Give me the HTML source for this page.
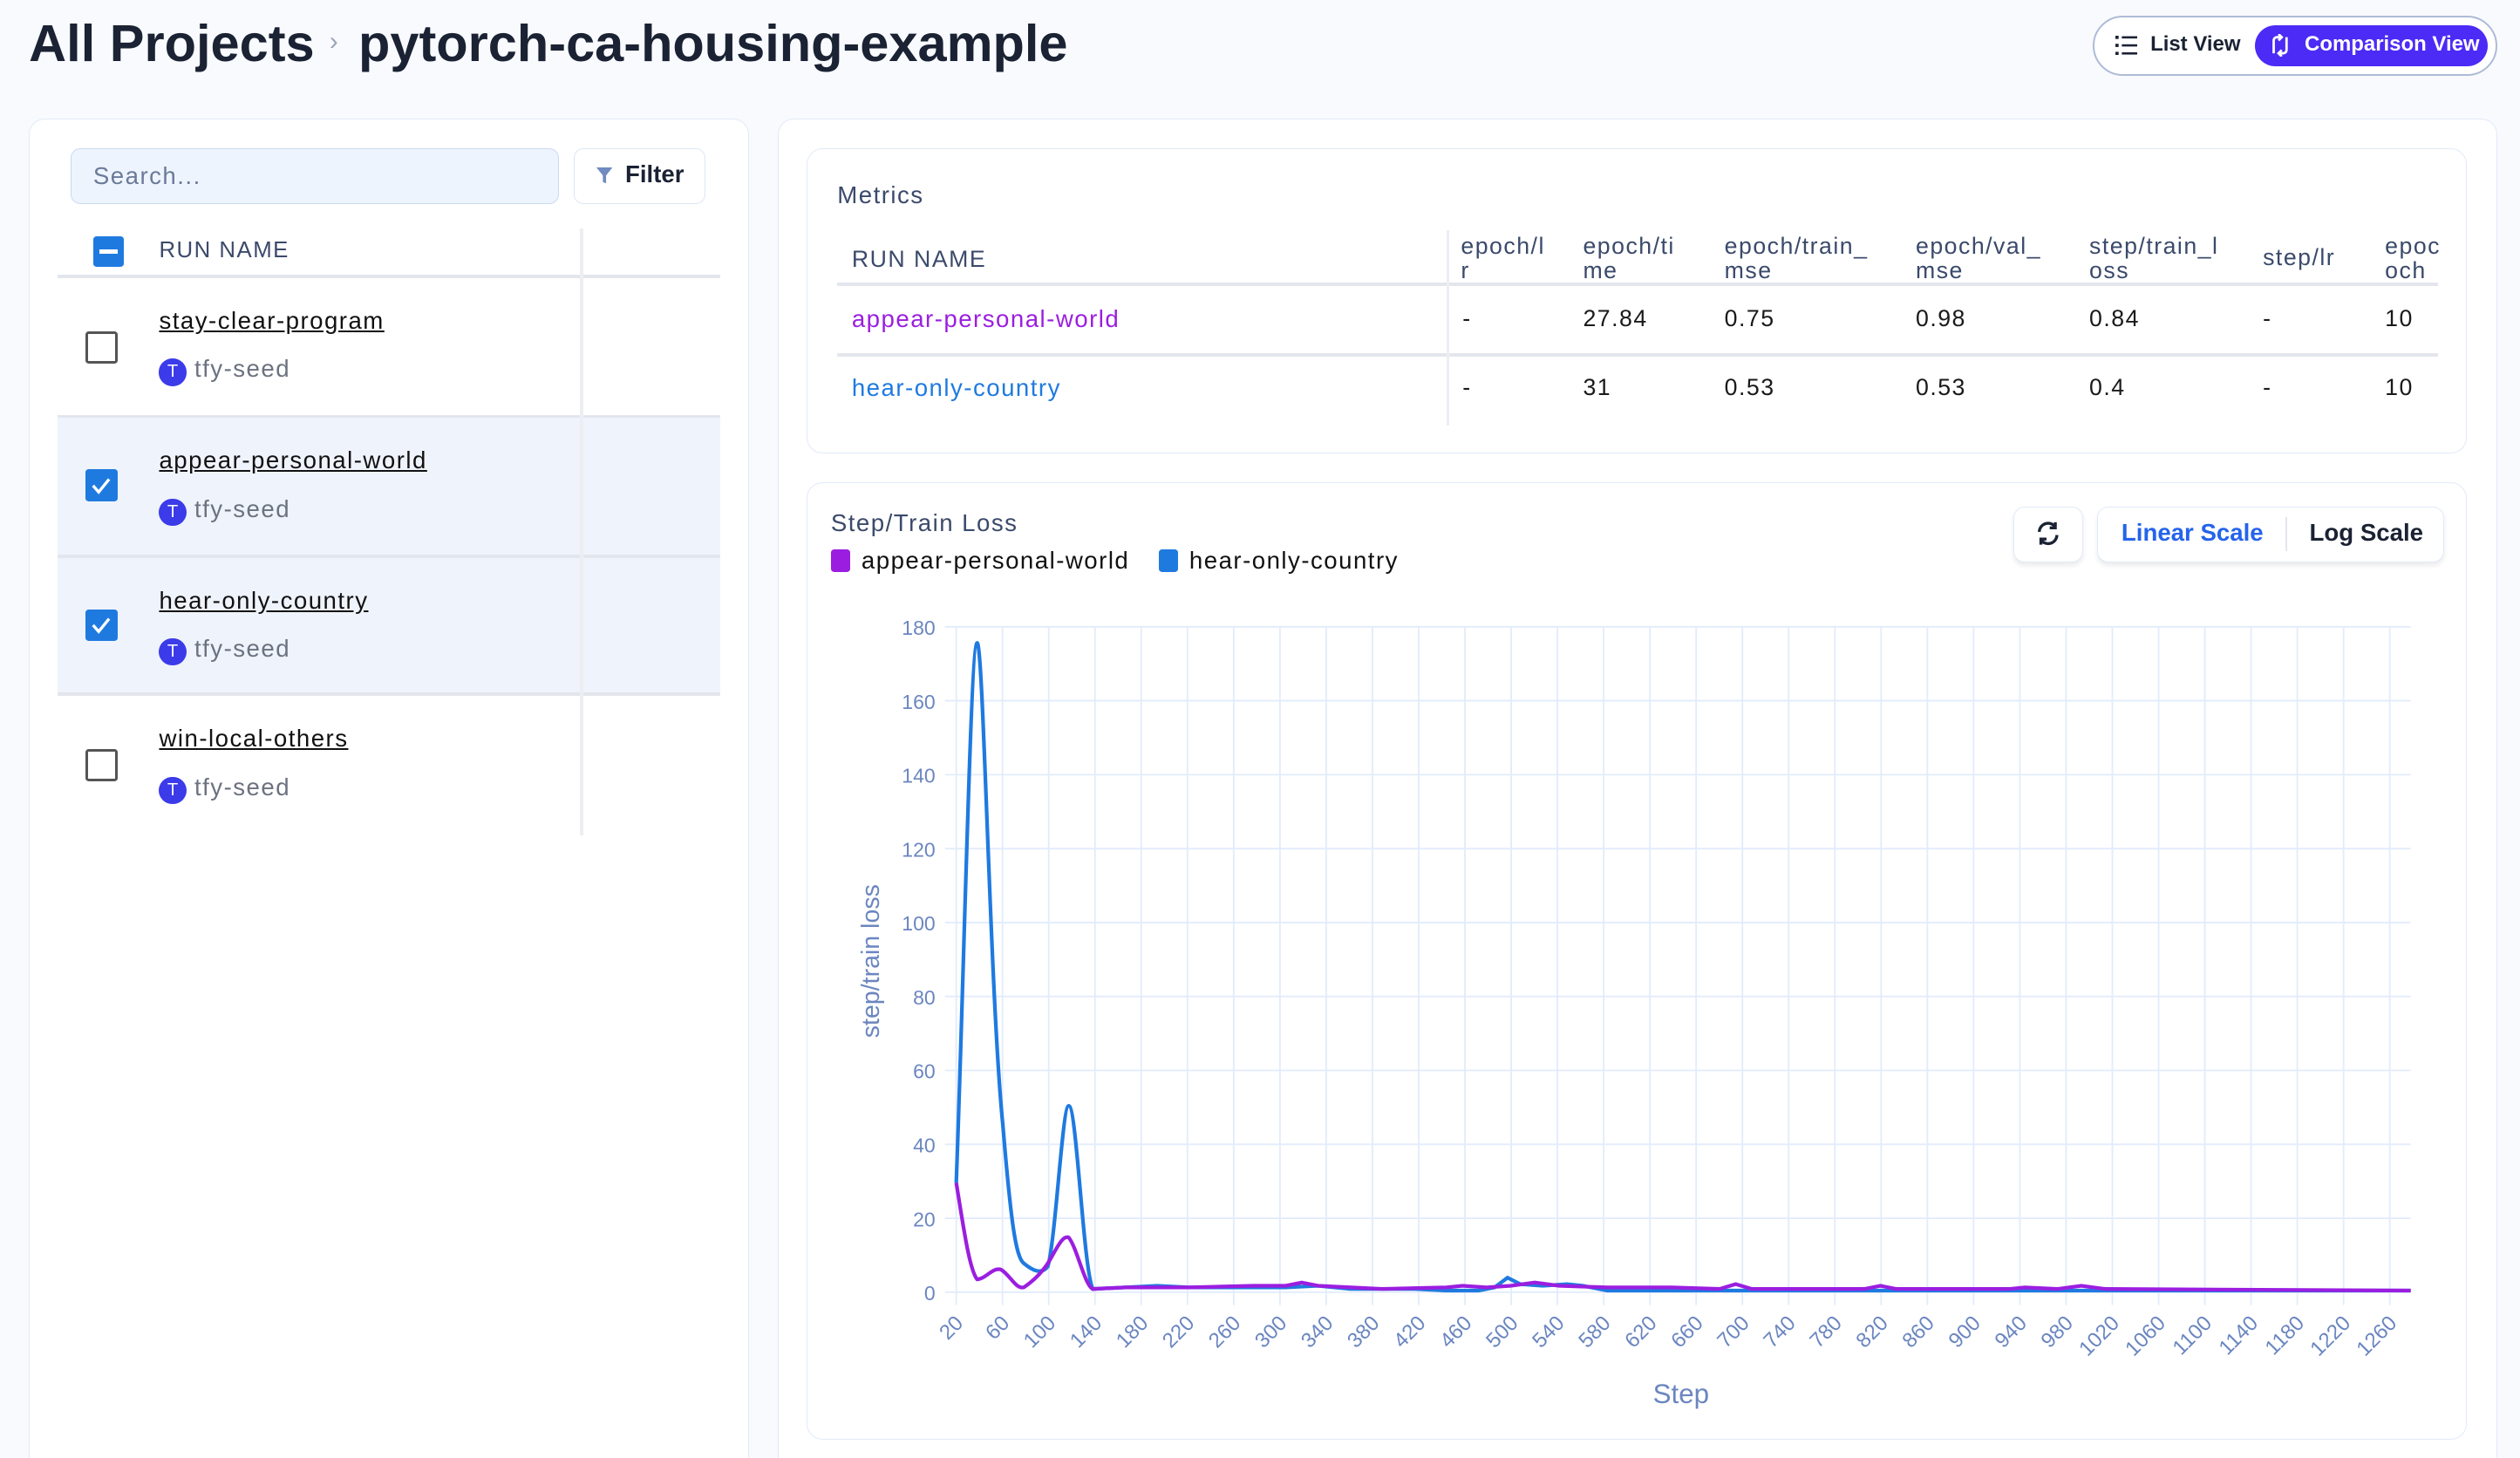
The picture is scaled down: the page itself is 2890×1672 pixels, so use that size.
<!DOCTYPE html>
<html><head><meta charset="utf-8"><style>
*{box-sizing:border-box;margin:0;padding:0}
html,body{width:2890px;height:1672px;overflow:hidden;background:#f8fafe}
#w{zoom:1.84311;width:1568px;height:907px;position:relative;font-family:"Liberation Sans",sans-serif;color:#1a2233;letter-spacing:0.05em}
.a{position:absolute}
.card{position:absolute;background:#fff;border:1px solid #e1eaf8;border-radius:10px}
.hd{font-size:14px;color:#3b4a6b}
.cell{position:absolute;font-size:14.5px;color:#1a1a1a}
.h2{position:absolute;font-size:14.5px;color:#3b4a6b;line-height:15px}
.nm{position:absolute;left:99px;font-size:15px;text-decoration:underline;color:#111}
.seed{position:absolute;left:99px;font-size:15px;color:#6b7280}
.seed i{display:inline-block;width:17px;height:17px;border-radius:50%;background:#3b3bea;color:#fff;font-style:normal;font-size:11px;text-align:center;line-height:17px;vertical-align:0px;margin-right:5px;letter-spacing:0}
.cb{position:absolute;left:53px;width:20px;height:20px;border-radius:2px}
</style></head><body><div id="w">
<div class="a" style="left:18px;top:8px;font-size:32.3px;font-weight:bold;letter-spacing:0">All Projects</div>
<div class="a" style="left:205px;top:17px;font-size:16px;color:#9aa4b8">›</div>
<div class="a" style="left:223px;top:8px;font-size:32.3px;font-weight:bold;letter-spacing:0">pytorch-ca-housing-example</div>
<div class="a" style="left:1302px;top:10px;width:252px;height:37px;border:1.5px solid #aebbd6;border-radius:19px;background:#fff"></div>
<svg class="a" style="left:1316px;top:22px" width="14" height="12" viewBox="0 0 14 12"><g fill="#1a2233"><rect x="0" y="0" width="2" height="2"/><rect x="0" y="5" width="2" height="2"/><rect x="0" y="10" width="2" height="2"/><rect x="4" y="0.3" width="10" height="1.4"/><rect x="4" y="5.3" width="10" height="1.4"/><rect x="4" y="10.3" width="10" height="1.4"/></g></svg>
<div class="a" style="left:1338px;top:20px;font-size:13px;font-weight:bold;letter-spacing:0">List View</div>
<div class="a" style="left:1403px;top:16px;width:145px;height:25px;background:#4b2bf5;border-radius:13px"></div>
<svg class="a" style="left:1412px;top:21px" width="14" height="14" viewBox="0 0 14 14" fill="none" stroke="#fff" stroke-width="1.5"><path d="M3 12V4a2 2 0 0 1 2-2h3M6 0l2 2-2 2M11 2v8a2 2 0 0 1-2 2H6M8 14l-2-2 2-2"/></svg>
<div class="a" style="left:1434px;top:20px;font-size:13px;font-weight:bold;color:#fff;letter-spacing:0">Comparison View</div>

<div class="card" style="left:18px;top:74px;width:448px;height:860px"></div>
<div class="a" style="left:44px;top:92px;width:304px;height:35px;background:#eef4fd;border:1px solid #c8d9f2;border-radius:6px"></div>
<div class="a" style="left:58px;top:101px;font-size:15px;color:#6b7a99">Search...</div>
<div class="a" style="left:357px;top:92px;width:82px;height:35px;background:#fff;border:1px solid #dde6f4;border-radius:6px"></div>
<svg class="a" style="left:371px;top:104px" width="10" height="10" viewBox="0 0 10 10"><path d="M0 0h10L6 5v5L4 9V5z" fill="#6f8bc0"/></svg>
<div class="a" style="left:389px;top:100px;font-size:15px;font-weight:bold;color:#1a2233;letter-spacing:0">Filter</div>
<div class="a" style="left:36px;top:259px;width:412px;height:173px;background:#eff3fb"></div>
<div class="a" style="left:36px;top:171px;width:412px;height:2px;background:#e3e6ec"></div>
<div class="a" style="left:36px;top:258px;width:412px;height:2px;background:#e3e6ec"></div>
<div class="a" style="left:36px;top:345px;width:412px;height:2px;background:#e3e6ec"></div>
<div class="a" style="left:36px;top:431px;width:412px;height:2px;background:#e3e6ec"></div>
<div class="a" style="left:361px;top:142px;width:2px;height:378px;background:#eceef2"></div>
<div class="a" style="left:58px;top:147px;width:19px;height:19px;background:#1f7ae0;border-radius:2px"></div>
<div class="a" style="left:62px;top:155px;width:11px;height:3px;background:#fff"></div>
<div class="a hd" style="left:99px;top:148px">RUN NAME</div>
<div class="cb" style="top:206px;border:2px solid #555"></div>
<div class="nm" style="top:191px">stay-clear-program</div><div class="seed" style="top:221px"><i>T</i>tfy-seed</div>
<div class="cb" style="top:292px;background:#1f7ae0"></div>
<svg class="a" style="left:56px;top:295px" width="14" height="14" viewBox="0 0 14 14"><path d="M2 7l3.5 4L12 3" stroke="#fff" stroke-width="1.8" fill="none"/></svg>
<div class="nm" style="top:278px">appear-personal-world</div><div class="seed" style="top:308px"><i>T</i>tfy-seed</div>
<div class="cb" style="top:379px;background:#1f7ae0"></div>
<svg class="a" style="left:56px;top:382px" width="14" height="14" viewBox="0 0 14 14"><path d="M2 7l3.5 4L12 3" stroke="#fff" stroke-width="1.8" fill="none"/></svg>
<div class="nm" style="top:365px">hear-only-country</div><div class="seed" style="top:395px"><i>T</i>tfy-seed</div>
<div class="cb" style="top:466px;border:2px solid #555"></div>
<div class="nm" style="top:451px">win-local-others</div><div class="seed" style="top:481px"><i>T</i>tfy-seed</div>

<div class="card" style="left:484px;top:74px;width:1070px;height:860px"></div>
<div class="card" style="left:502px;top:92px;width:1033px;height:190px"></div>
<div class="a" style="left:521px;top:113px;font-size:15px;color:#3b4a6b">Metrics</div>
<div class="a hd" style="left:530px;top:153px;font-size:14.5px">RUN NAME</div>
<div class="h2" style="left:909px;top:146px">epoch/l<br>r</div>
<div class="h2" style="left:985px;top:146px">epoch/ti<br>me</div>
<div class="h2" style="left:1073px;top:146px">epoch/train_<br>mse</div>
<div class="h2" style="left:1192px;top:146px">epoch/val_<br>mse</div>
<div class="h2" style="left:1300px;top:146px">step/train_l<br>oss</div>
<div class="h2" style="left:1408px;top:153px">step/lr</div>
<div class="h2" style="left:1484px;top:146px">epoc<br>och</div>
<div class="a" style="left:521px;top:176px;width:996px;height:2px;background:#e3e6ec"></div>
<div class="a" style="left:521px;top:220px;width:996px;height:2px;background:#e3e6ec"></div>
<div class="a" style="left:900px;top:143px;width:2px;height:122px;background:#eceef2"></div>
<div class="cell" style="left:530px;top:190px;color:#9b1ee0;font-size:15px">appear-personal-world</div>
<div class="cell" style="left:910px;top:190px">-</div><div class="cell" style="left:985px;top:190px">27.84</div><div class="cell" style="left:1073px;top:190px">0.75</div><div class="cell" style="left:1192px;top:190px">0.98</div><div class="cell" style="left:1300px;top:190px">0.84</div><div class="cell" style="left:1408px;top:190px">-</div><div class="cell" style="left:1484px;top:190px">10</div>
<div class="cell" style="left:530px;top:233px;color:#1f7ae0;font-size:15px">hear-only-country</div>
<div class="cell" style="left:910px;top:233px">-</div><div class="cell" style="left:985px;top:233px">31</div><div class="cell" style="left:1073px;top:233px">0.53</div><div class="cell" style="left:1192px;top:233px">0.53</div><div class="cell" style="left:1300px;top:233px">0.4</div><div class="cell" style="left:1408px;top:233px">-</div><div class="cell" style="left:1484px;top:233px">10</div>

<div class="card" style="left:502px;top:300px;width:1033px;height:596px"></div>
<div class="a" style="left:517px;top:317px;font-size:15px;color:#3b4a6b">Step/Train Loss</div>
<div class="a" style="left:517px;top:342px;width:12px;height:14px;background:#9b1ee0;border-radius:2px"></div>
<div class="a" style="left:536px;top:340px;font-size:15px;color:#111">appear-personal-world</div>
<div class="a" style="left:721px;top:342px;width:12px;height:14px;background:#1f7ae0;border-radius:2px"></div>
<div class="a" style="left:740px;top:340px;font-size:15px;color:#111">hear-only-country</div>
<div class="a" style="left:1253px;top:315px;width:43px;height:35px;background:#fff;border:1px solid #e1eaf8;border-radius:7px;box-shadow:0 2px 3px rgba(0,0,0,.08)"></div>
<svg class="a" style="left:1267px;top:324px" width="15" height="16" viewBox="0 0 15 16" fill="none" stroke="#1a2233" stroke-width="1.8"><path d="M2 7a5.5 5.5 0 0 1 10-3M13 9a5.5 5.5 0 0 1-10 3M12 1v3.5H8.5M3 15v-3.5h3.5"/></svg>
<div class="a" style="left:1305px;top:315px;width:216px;height:35px;background:#fff;border:1px solid #e1eaf8;border-radius:7px;box-shadow:0 2px 3px rgba(0,0,0,.08)"></div>
<div class="a" style="left:1422px;top:322px;width:1px;height:21px;background:#e3e6ec"></div>
<div class="a" style="left:1320px;top:323px;font-size:15px;font-weight:bold;color:#2563eb;letter-spacing:0">Linear Scale</div>
<div class="a" style="left:1437px;top:323px;font-size:15px;font-weight:bold;color:#1a2233;letter-spacing:0">Log Scale</div>

<svg class="a" style="left:0;top:0;letter-spacing:0" width="1568" height="907" font-family="Liberation Sans, sans-serif">
<g stroke="#e2ecfb" stroke-width="1">
<line x1="588" x2="1500" y1="390" y2="390"/><line x1="588" x2="1500" y1="436" y2="436"/><line x1="588" x2="1500" y1="482" y2="482"/><line x1="588" x2="1500" y1="528" y2="528"/><line x1="588" x2="1500" y1="574" y2="574"/><line x1="588" x2="1500" y1="620" y2="620"/><line x1="588" x2="1500" y1="666" y2="666"/><line x1="588" x2="1500" y1="712" y2="712"/><line x1="588" x2="1500" y1="758" y2="758"/><line x1="588" x2="1500" y1="804" y2="804"/>
</g>
<g id="vg" stroke="#e2ecfb" stroke-width="1"></g>
<g fill="#6b86c0" font-size="12.5" text-anchor="end">
<text x="582" y="395">180</text><text x="582" y="441">160</text><text x="582" y="487">140</text><text x="582" y="533">120</text><text x="582" y="579">100</text><text x="582" y="625">80</text><text x="582" y="671">60</text><text x="582" y="717">40</text><text x="582" y="763">20</text><text x="582" y="809">0</text>
</g>
<g id="xl" fill="#6b86c0" font-size="13" text-anchor="end"></g>
<text x="547" y="598" fill="#6b86c0" font-size="15.5" text-anchor="middle" transform="rotate(-90 547 598)">step/train loss</text>
<text x="1046" y="873" fill="#6b86c0" font-size="17" text-anchor="middle">Step</text>
<path d="M595 736 C600 600 604 400 608 400 C612 400 616 620 624 700 C629 760 632 782 637 786 C643 791 648 793 652 788 C657 770 661 688 665 688 C670 688 674 790 680 802 L700 801 L720 800 L740 801 L760 801 L780 801 L800 801 L820 800 L840 802 L860 802 L880 802 L900 803 L920 803 L930 801 L938 795 L946 799 L960 800 L975 799 L985 800 L1000 803 L1040 803 L1100 803 L1200 803 L1300 803 L1400 803 L1500 803" stroke="#1f7ae0" stroke-width="2.3" fill="none"/>
<path d="M595 736 C599 760 603 790 608 796 C613 796 618 788 623 790 C629 794 632 802 637 801 C643 797 648 792 652 786 C657 778 661 768 665 770 C670 776 675 800 680 802 L700 801 L740 801 L780 800 L800 800 L810 798 L820 800 L860 802 L900 801 L910 800 L925 801 L940 800 L955 798 L970 800 L1000 801 L1040 801 L1070 802 L1080 799 L1090 802 L1160 802 L1170 800 L1180 802 L1250 802 L1260 801 L1280 802 L1295 800 L1310 802 L1500 803" stroke="#9b1ee0" stroke-width="2.3" fill="none"/>
</svg>
<script>
(function(){var ns="http://www.w3.org/2000/svg",vg=document.getElementById("vg"),xl=document.getElementById("xl");
for(var s=20;s<=1260;s+=40){var x=595+(s-20)*0.71935;
var l=document.createElementNS(ns,"line");l.setAttribute("x1",x);l.setAttribute("x2",x);l.setAttribute("y1",390);l.setAttribute("y2",812);vg.appendChild(l);
var t=document.createElementNS(ns,"text");t.setAttribute("x",x+5);t.setAttribute("y",824);t.setAttribute("transform","rotate(-45 "+(x+5)+" 824)");t.textContent=s;xl.appendChild(t);}})();
</script>
</div></body></html>
